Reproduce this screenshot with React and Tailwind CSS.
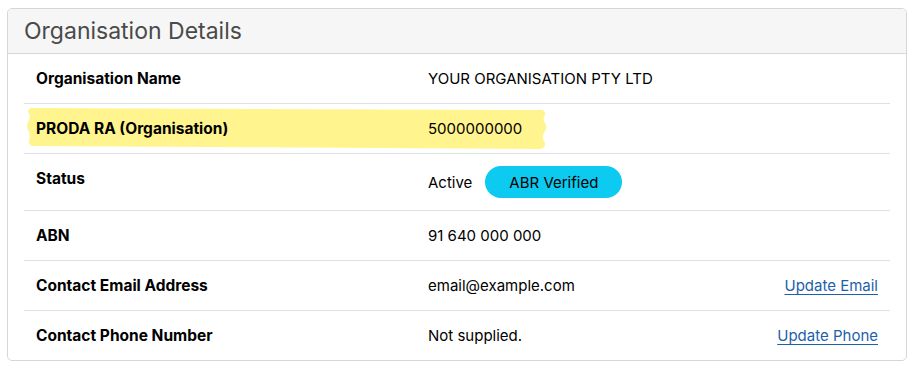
import React from 'react'

const rows = [
  { label: 'Organisation Name', value: 'YOUR ORGANISATION PTY LTD' },
  { label: 'PRODA RA (Organisation)', value: '5000000000', highlight: true },
  { label: 'Status', value: 'Active', badge: 'ABR Verified' },
  { label: 'ABN', value: '91 640 000 000' },
  { label: 'Contact Email Address', value: 'email@example.com', link: 'Update Email' },
  { label: 'Contact Phone Number', value: 'Not supplied.', link: 'Update Phone' },
]

/** Marker-pen style highlight sitting behind the row text. */
function Highlight() {
  return (
    <svg
      className="absolute left-[2px] top-[3px]"
      width="522"
      height="43"
      viewBox="0 0 522 43"
      aria-hidden="true"
    >
      <path
        d="M6 1 L512 3 Q520 2 519 8 Q516 12 519 16 Q522 21 518 26 Q515 31 519 36 Q520 42 512 42 L8 39 Q2 39 3 33 Q5 28 2 23 Q0 18 3 13 Q5 8 2 5 Q2 1 6 1 Z"
        fill="#fff48d"
      />
    </svg>
  )
}

function Row({ row, first }) {
  return (
    <div className={`relative flex ${first ? '' : 'border-t border-[#dee2e6]'}`}>
      {row.highlight && <Highlight />}
      <div className="relative w-[392px] shrink-0 px-3 py-3 text-[15.5px] leading-[25px] font-bold text-black">
        {row.label}
      </div>
      <div className="relative flex flex-1 items-baseline justify-between px-3 py-3 text-[15px] leading-[25px] text-black">
        <div className="flex items-baseline gap-[13px]">
          <span>{row.value}</span>
          {row.badge && (
            <span className="inline-block rounded-full bg-[#0dcaf0] px-6 py-[3.5px] text-[15px] leading-[25px] text-black">
              {row.badge}
            </span>
          )}
        </div>
        {row.link && (
          <a href="#" className="text-[#1d5fab] underline underline-offset-[3px]">
            {row.link}
          </a>
        )}
      </div>
    </div>
  )
}

export default function App() {
  return (
    <div className="min-h-[369px] bg-white pt-[8px] pl-[7px]" style={{ fontFamily: 'Inter, "Liberation Sans", Arial, sans-serif' }}>
      <div className="w-[900px] overflow-hidden rounded-[5px] border border-[#d6d6d6] bg-white">
        <div className="h-[45px] border-b border-[#d6d6d6] bg-[#f6f6f6] px-4 pt-[8px]">
          <h2 className="text-[23px] leading-[28px] text-[#4a4a4a]">Organisation Details</h2>
        </div>
        <div className="px-4">
          {rows.map((row, i) => (
            <Row key={row.label} row={row} first={i === 0} />
          ))}
        </div>
      </div>
    </div>
  )
}
